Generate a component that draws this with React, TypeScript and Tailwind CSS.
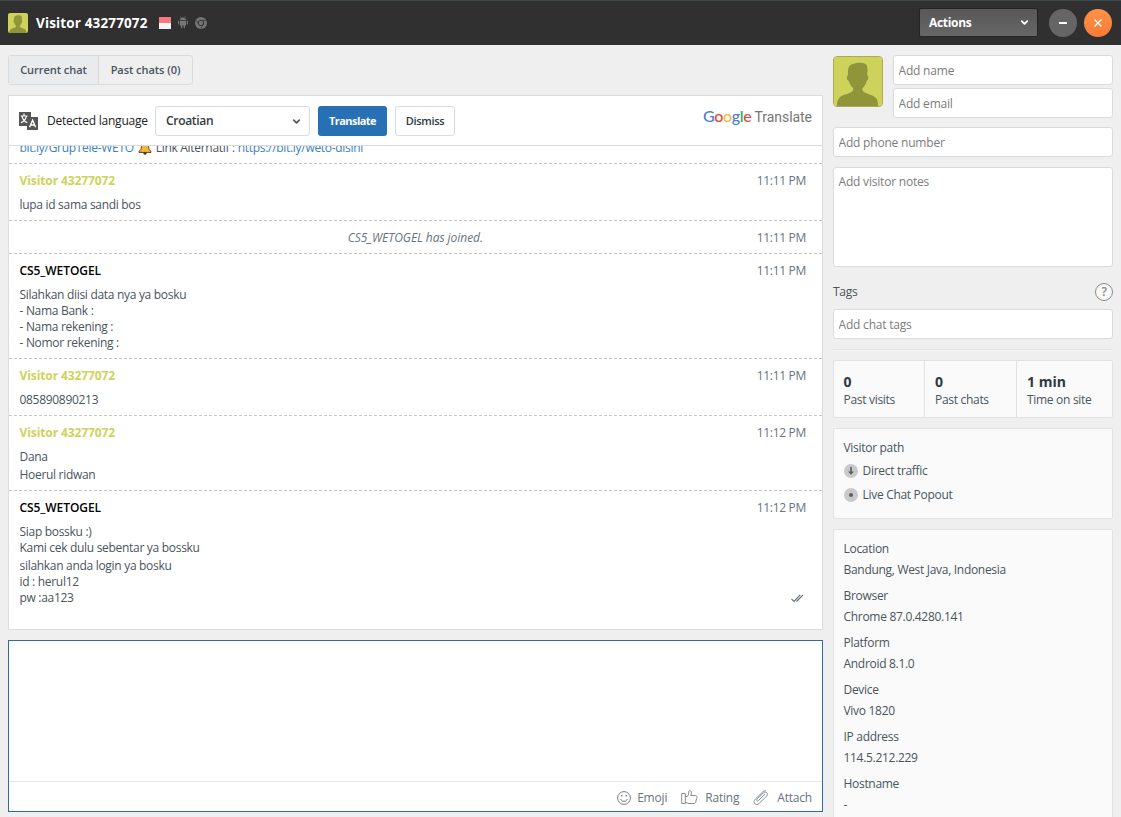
import type { ReactNode } from 'react'
import { ChevronDown } from 'lucide-react'

type Message = {
  from: string
  agent?: boolean
  time: string
  blocks: string[][]
  delivered?: boolean
}

const firstMessages: Message[] = [
  { from: 'Visitor 43277072', time: '11:11 PM', blocks: [['lupa id sama sandi bos']] },
]

const messages: Message[] = [
  {
    from: 'CS5_WETOGEL',
    agent: true,
    time: '11:11 PM',
    blocks: [['Silahkan diisi data nya ya bosku', '- Nama Bank :', '- Nama rekening :', '- Nomor rekening :']],
  },
  { from: 'Visitor 43277072', time: '11:11 PM', blocks: [['085890890213']] },
  { from: 'Visitor 43277072', time: '11:12 PM', blocks: [['Dana'], ['Hoerul ridwan']] },
  {
    from: 'CS5_WETOGEL',
    agent: true,
    time: '11:12 PM',
    blocks: [
      ['Siap bossku :)', 'Kami cek dulu sebentar ya bossku'],
      ['silahkan anda login ya bosku', 'id : herul12', 'pw :aa123'],
    ],
    delivered: true,
  },
]

const details = [
  { label: 'Location', value: 'Bandung, West Java, Indonesia' },
  { label: 'Browser', value: 'Chrome 87.0.4280.141' },
  { label: 'Platform', value: 'Android 8.1.0' },
  { label: 'Device', value: 'Vivo 1820' },
  { label: 'IP address', value: '114.5.212.229' },
  { label: 'Hostname', value: '-' },
]

function Avatar({ className }: { className: string }) {
  return (
    <svg viewBox="0 0 50 50" preserveAspectRatio="none" className={className}>
      <rect width="50" height="50" fill="#cdd35a" />
      <path
        d="M3 50C3 42 7 39.500 13 38C18 36.500 20 35.500 20 32C17.500 29.500 16 27 15.500 24.500C14 24.500 13 22 13.500 20C13.700 19 14.500 19 14.700 19C14 13 15 8.500 19 7.500C22 5.500 29 5.500 31 6.500C35 7 35.500 12 34.500 19C36.500 19 36 24 34 24.500C33.500 27 32 30 29.500 32C29.500 35.500 32 36.500 36 38C43 40 46 42 46 50Z"
        fill="#90943a"
      />
    </svg>
  )
}

function AndroidIcon() {
  return (
    <svg width="12" height="13" viewBox="0 0 12 13" fill="#777">
      <path d="M3 4.200C3 2.600 4.200 1.500 6 1.500S9 2.600 9 4.200Z" />
      <path d="M3.500 0.500L4.500 2M8.500 0.500L7.500 2" stroke="#777" strokeWidth="0.700" />
      <path d="M3 4.900H9V9.500H3ZM1 4.700H2.200V8.500H1ZM9.800 4.700H11V8.500H9.800ZM4 9.500H5.300V12H4ZM6.700 9.500H8V12H6.700Z" />
    </svg>
  )
}

function ChromeIcon() {
  return (
    <svg width="12" height="12" viewBox="0 0 12 12" fill="none">
      <circle cx="6" cy="6" r="6" fill="#747474" />
      <circle cx="6" cy="6" r="2.700" stroke="#3a3a3a" />
      <path d="M6 3.300H11.200M3.600 7.200L1.200 3.200M8.300 7.300L5.800 11.700" stroke="#3a3a3a" strokeWidth="0.800" />
    </svg>
  )
}

function TranslateIcon() {
  return (
    <svg width="19" height="18" viewBox="0 0 19 18" fill="none">
      <path d="M0 0H12V5H19V18H8V14H0Z" fill="#555" />
      <path d="M5 1.500V3.500M1.800 4H8.600M3 4.300C3.700 7 5.500 9.500 8.300 10.600M7.400 4.300C6.600 7.300 4.500 9.700 1.800 10.600" stroke="#fff" strokeWidth="1.200" />
      <path d="M10.600 15.200L13.600 8.200L16.600 15.200M11.600 13H15.600" stroke="#fff" strokeWidth="1.400" />
    </svg>
  )
}

function BellIcon() {
  return (
    <svg width="14" height="14" viewBox="0 0 14 14">
      <circle cx="7" cy="12" r="1.700" fill="#3c3123" />
      <path
        d="M7 0.700C4.300 0.700 3.500 3 3.400 5.500C3.300 8.500 2.400 9.300 1 10.400V11.400H13V10.400C11.600 9.300 10.700 8.500 10.600 5.500C10.500 3 9.700 0.700 7 0.700Z"
        fill="#f3b73c"
        stroke="#493717"
        strokeWidth="0.900"
      />
    </svg>
  )
}

function MessageRow({ message }: { message: Message }) {
  return (
    <div className="border-t border-dashed border-[#c6c6c6] pl-[10.500px] pr-4 pt-[9px] pb-[7px]">
      <div className="flex justify-between leading-4">
        <span className={message.agent ? 'font-semibold tracking-[-0.080px] text-black' : 'font-bold tracking-[-0.100px] text-[#cdd35a]'}>
          {message.from}
        </span>
        <span className="tracking-[-0.300px] text-[#68737d]">{message.time}</span>
      </div>
      <div className="mt-2 flex items-end justify-between">
        <div className="flex flex-col gap-0.5">
          {message.blocks.map((lines, i) => (
            <div key={i} className="whitespace-pre-line">
              {lines.join('\n')}
            </div>
          ))}
        </div>
        {message.delivered && (
          <svg width="13" height="9" viewBox="0 0 13 9" fill="none" stroke="#68737d" strokeWidth="1.200" className="mr-0.5 mb-[3px]">
            <path d="M0.500 5L3 7.500L9.200 0.800M5.500 7.500L12 0.800" />
          </svg>
        )}
      </div>
    </div>
  )
}

function TextInput({ placeholder }: { placeholder: string }) {
  return (
    <input
      placeholder={placeholder}
      className="block h-[30px] w-full rounded-[3px] border border-[#d8dcde] bg-white px-[4.500px] pt-px tracking-[-0.200px] placeholder:text-[#7c7c7c]"
    />
  )
}

function Card({ children, className }: { children: ReactNode; className: string }) {
  return <div className={`rounded-[2px] border border-[#e2e2e2] bg-[#fafafa] ${className}`}>{children}</div>
}

function Stat({ value, label, className }: { value: string; label: string; className: string }) {
  return (
    <div className={`pt-3 ${className}`}>
      <div className="text-[14px] font-bold leading-[18px] tracking-normal text-[#2f3941]">{value}</div>
      <div className="leading-[18px]">{label}</div>
    </div>
  )
}

function Header() {
  return (
    <header className="flex h-[45px] shrink-0 items-center border-t border-[#414a4a] bg-[#303030] pb-px pl-2 pr-[9px]">
      <Avatar className="h-5 w-5 rounded-[2px]" />
      <h1 className="ml-2 w-[123px] whitespace-nowrap text-[13.500px] font-bold tracking-[0.140px] text-white">Visitor 43277072</h1>
      <div className="h-3 w-3 bg-linear-to-b from-[#f97880] from-50% to-[#f6f6f6] to-50%" />
      <div className="ml-[6px] flex items-center gap-1.5">
        <AndroidIcon />
        <ChromeIcon />
      </div>
      <button className="ml-auto flex h-[29px] w-[119px] items-center justify-between rounded-[2px] border border-[#242424] bg-linear-to-b from-[#585858] to-[#666] pl-[9px] pr-[7px] font-bold text-white">
        Actions
        <ChevronDown size={11} strokeWidth={4} />
      </button>
      <button className="ml-[11px] flex h-7 w-7 items-center justify-center rounded-full bg-[#656565]">
        <span className="h-0.5 w-2 bg-white" />
      </button>
      <button className="ml-[7px] flex h-7 w-7 items-center justify-center rounded-full bg-linear-to-b from-[#fd9246] to-[#f77b38]">
        <svg width="8" height="8" viewBox="0 0 8 8" stroke="#fff" strokeWidth="1.400">
          <path d="M0.500 0.500L7.500 7.500M7.500 0.500L0.500 7.500" />
        </svg>
      </button>
    </header>
  )
}

function TranslateBar() {
  return (
    <div className="flex h-[50px] shrink-0 items-center border-b border-[#d8dcde] pl-2.5 pr-2.5">
      <TranslateIcon />
      <span className="ml-[9px] w-[108px] whitespace-nowrap tracking-[-0.220px] text-[#222]">Detected language</span>
      <button className="flex h-[30px] w-[155px] items-center justify-between rounded-[3px] border border-[#d8dcde] pl-2.5 pr-[7px] pt-px font-semibold text-[#2f3941]">
        Croatian
        <ChevronDown size={11} strokeWidth={3.5} className="text-[#555]" />
      </button>
      <button className="ml-2 h-[30px] w-[69px] rounded-[3px] bg-[#2870b4] text-[11px] font-bold tracking-[-0.550px] text-white">Translate</button>
      <button className="ml-2 h-[30px] w-[60px] rounded-[3px] border border-[#d8dcde] text-[11px] font-semibold tracking-[-0.300px] text-[#2f3941]">Dismiss</button>
      <div className="-mt-2 ml-auto flex items-baseline text-[#757575]">
        <span className="font-['Lato',sans-serif] text-[16px] font-medium tracking-[-0.300px]">
          <span className="text-[#4b7bdc]">G</span>
          <span className="text-[#df4a3c]">o</span>
          <span className="text-[#f3bc45]">o</span>
          <span className="text-[#4b7bdc]">g</span>
          <span className="text-[#31a45a]">l</span>
          <span className="text-[#df4a3c]">e</span>
        </span>
        <span className="ml-[3px] font-['Roboto',sans-serif] text-[14px] tracking-[-0.050px]">Translate</span>
      </div>
    </div>
  )
}

function ChatPanel() {
  return (
    <section className="flex h-[535px] flex-col overflow-hidden border border-[#dcdcdc] bg-white">
      <TranslateBar />
      {/* the transcript is scrolled, so its first line is cut by the bar */}
      <div className="flex h-[17px] shrink-0 flex-col justify-end overflow-hidden pb-[7px] pl-[10.500px]">
        <div className="flex h-4 shrink-0 items-center gap-1 whitespace-nowrap">
          <a className="text-[#3b7fc0]">bit.ly/GrupTele-WETO</a>
          <BellIcon />
          <span>
            Link Alternatif : <a className="text-[#3b7fc0]">https://bit.ly/weto-disini</a>
          </span>
        </div>
      </div>
      {firstMessages.map((m) => (
        <MessageRow key={m.from} message={m} />
      ))}
      <div className="flex h-[33px] items-center border-t border-dashed border-[#c6c6c6] pr-4 pt-px text-[#68737d]">
        <span className="flex-1 pl-[65px] text-center italic tracking-[-0.050px]">CS5_WETOGEL has joined.</span>
        <span className="tracking-[-0.300px]">11:11 PM</span>
      </div>
      {messages.map((m, i) => (
        <MessageRow key={i} message={m} />
      ))}
    </section>
  )
}

function Composer() {
  return (
    <section className="mt-2.5 flex h-[172px] flex-col border border-[#326a9e] bg-white">
      <textarea className="w-full flex-1 resize-none outline-none" />
      <div className="flex h-[30px] items-center justify-end border-t border-[#e3e6e8] pr-2.5 pt-0.5 tracking-[-0.200px] text-[#68737d]">
        <svg width="14" height="14" viewBox="0 0 14 14" fill="none" stroke="#747d84">
          <circle cx="7" cy="7" r="6.400" />
          <path d="M3.700 8C4.300 11.200 9.700 11.200 10.300 8" />
          <path d="M4.800 4V5.600M9.200 4V5.600" strokeWidth="1.400" />
        </svg>
        <span className="ml-1.5">Emoji</span>
        <svg width="17" height="15" viewBox="0 0 17 15" fill="none" stroke="#858d93" className="ml-3.5">
          <path d="M0.700 3.500H4.300V13.500H0.700Z" />
          <path
            d="M4.300 6.500H6.300C7.800 5 7.700 3.500 7.700 1.500C7.700 0.300 10 0.300 10.300 2C10.600 3.500 10 4.700 9.700 5.500H14.500C16.200 5.500 16.200 7.500 15.700 8.300L14.700 12.200C14.400 13.300 13.800 13.500 13 13.500H8C6.500 13.500 6 12.300 4.300 12.300"
            strokeLinejoin="round"
          />
        </svg>
        <span className="ml-[7px]">Rating</span>
        <svg width="16" height="16" viewBox="0 0 16 16" fill="none" stroke="#858d93" strokeLinecap="round" className="ml-3.5">
          <path d="M11.700 4.300L5.500 10.500C4.300 11.700 2.900 10.300 4.100 9.100L10.300 2.900C12.700 0.600 16 3.600 13.500 6.200L6.500 13.200C3 16.600 -1.100 12.600 2.300 9.200L9.400 2.200C10.400 1.200 11.500 0.700 12.500 0.800" />
        </svg>
        <span className="ml-2">Attach</span>
      </div>
    </section>
  )
}

function Sidebar() {
  return (
    <aside className="flex w-[280px] shrink-0 flex-col">
      <div className="flex gap-2.5">
        <Avatar className="mt-px h-[51px] w-[50px] shrink-0 rounded-[4px] border border-[#a9ac51]" />
        <div className="flex flex-1 flex-col gap-[3px]">
          <TextInput placeholder="Add name" />
          <TextInput placeholder="Add email" />
        </div>
      </div>
      <div className="mt-[9px]">
        <TextInput placeholder="Add phone number" />
      </div>
      <textarea
        placeholder="Add visitor notes"
        className="mt-2.5 h-[100px] w-full shrink-0 resize-none rounded-[3px] border border-[#d8dcde] bg-white px-[4.500px] py-1.5 tracking-[-0.200px] placeholder:text-[#7c7c7c]"
      />
      <div className="mt-4 flex h-[18px] items-center justify-between">
        <span>Tags</span>
        <span className="flex h-[18px] w-[18px] items-center justify-center rounded-full border border-[#8b8b8b] bg-[#f8f8f8] font-semibold text-[#8b8b8b]">
          ?
        </span>
      </div>
      <div className="mt-2">
        <TextInput placeholder="Add chat tags" />
      </div>
      <div className="mt-2.5 h-0.5 shrink-0 border-t border-[#e2e2e2] bg-[#f8f8f8]" />
      <Card className="mt-[9px] flex h-[58px] shrink-0">
        <Stat value="0" label="Past visits" className="w-[91px] border-r border-[#e2e2e2] pl-[9.500px]" />
        <Stat value="0" label="Past chats" className="w-[92px] border-r border-[#e2e2e2] pl-2.5" />
        <Stat value="1 min" label="Time on site" className="flex-1 pl-2.5" />
      </Card>
      <Card className="mt-2.5 h-[91px] shrink-0 px-[9.500px] pt-2.5">
        <div className="leading-[18px]">Visitor path</div>
        <div className="mt-[5px] flex h-[18px] items-center gap-[5px]">
          <svg width="14" height="14" viewBox="0 0 14 14" className="-mt-px">
            <circle cx="7" cy="7" r="7" fill="#c9c9c9" />
            <path d="M6.200 3H7.800V7.500H10L7 10.700L4 7.500H6.200Z" fill="#5d5d5d" />
          </svg>
          <span>Direct traffic</span>
        </div>
        <div className="mt-1.5 flex h-[18px] items-center gap-[5px]">
          <svg width="14" height="14" viewBox="0 0 14 14" className="-mt-px">
            <circle cx="7" cy="7" r="7" fill="#c9c9c9" />
            <circle cx="7" cy="7" r="2" fill="#5d5d5d" />
          </svg>
          <span>Live Chat Popout</span>
        </div>
      </Card>
      <Card className="mt-2.5 h-[320px] shrink-0 px-[9.500px] pt-2">
        {details.map((d) => (
          <div key={d.label} className="mb-[5px]">
            <div className="leading-[21px]">{d.label}</div>
            <div className="leading-[21px]">{d.value}</div>
          </div>
        ))}
      </Card>
    </aside>
  )
}

export default function App() {
  return (
    <div className="flex h-[817px] w-[1121px] flex-col overflow-hidden bg-[#efefef] font-['Open_Sans','Noto_Sans',sans-serif] text-[12px] leading-4 tracking-[-0.300px] text-[#49545c]">
      <Header />
      <div className="flex min-h-0 flex-1 items-start gap-2.5 pl-2 pt-2.5">
        <main className="w-[815px] shrink-0">
          <div className="mb-2.5 flex h-[30px] w-[185px] rounded-[3px] border border-[#d8dcde] text-[11px] font-semibold tracking-[-0.050px]">
            <button className="w-[90px] border-r border-[#d8dcde] bg-[#e9ebed]">Current chat</button>
            <button className="flex-1">Past chats (0)</button>
          </div>
          <ChatPanel />
          <Composer />
        </main>
        <Sidebar />
      </div>
    </div>
  )
}
